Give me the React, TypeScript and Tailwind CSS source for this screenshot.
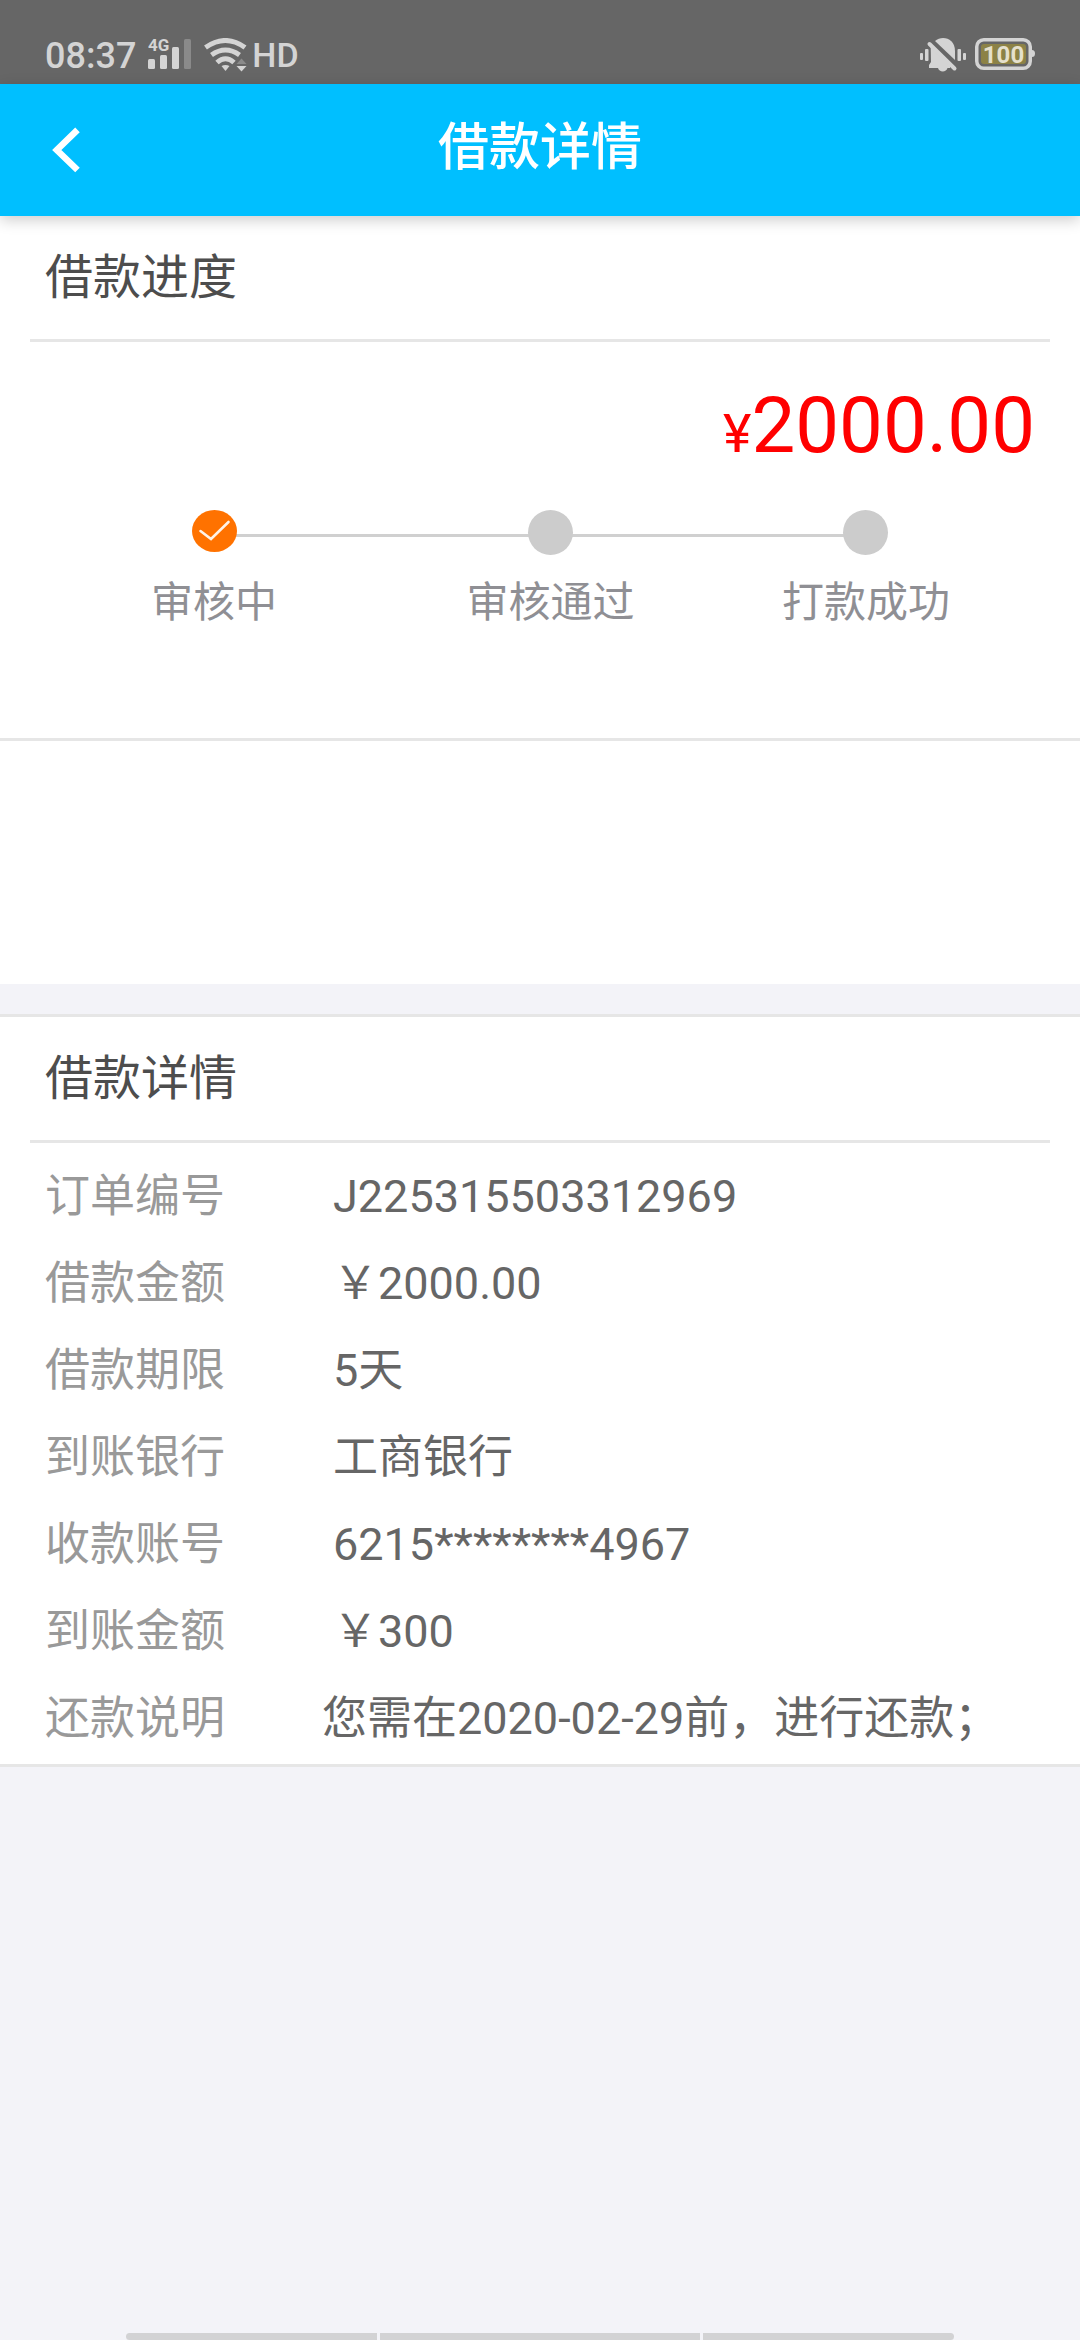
import { useState } from 'react';

const steps = [
    { label: '审核中', done: true },
    { label: '审核通过', done: false },
    { label: '打款成功', done: false },
];

const details = [
    { label: '订单编号', value: 'J225315503312969' },
    { label: '借款金额', value: '￥2000.00' },
    { label: '借款期限', value: '5天' },
    { label: '到账银行', value: '工商银行' },
    { label: '收款账号', value: '6215********4967' },
    { label: '到账金额', value: '￥300' },
    { label: '还款说明', value: '您需在2020-02-29前，进行还款；', note: true },
];

function StatusBar() {
    return (
        <div className="h-[84px] bg-[#666666] pt-7 px-[45px] flex items-center justify-between text-[#d4d4d4] leading-none">
            <div className="flex items-center">
                <span className="text-4xl leading-none font-medium">08:37</span>
                <svg className="ml-3 w-11 h-10 overflow-visible" viewBox="0 -2 44 40" fill="currentColor">
                    <text x="0" y="13" fontSize="17" fontWeight="700">4G</text>
                    <rect x="0" y="21" width="7" height="10" rx="1.5" />
                    <rect x="12" y="17" width="7" height="14" rx="1.5" />
                    <rect x="24" y="9" width="7" height="22" rx="1.5" />
                    <rect x="36" y="1" width="7" height="30" rx="1.5" fill="#8a8a8a" />
                </svg>
                <svg className="ml-3 w-11 h-9" viewBox="0 0 44 36" fill="none" stroke="currentColor" strokeWidth="5">
                    <path d="M1.5 9.5 Q21.5 -4.5 41 9.5" />
                    <path d="M7.5 17 Q21.5 7 35.5 17" />
                    <path d="M13 24.5 Q21.5 17 30 24.5" />
                    <path d="M17.5 28 Q21.5 26 25.5 28 L21.5 33 Z" fill="currentColor" stroke="none" />
                    <path d="M31 27 L37.5 18.5 L44 27 Z" fill="#666666" stroke="none" />
                    <path d="M32.5 26 L37.5 20.5 L42.5 26 Z" fill="#8a8a8a" stroke="none" />
                    <path d="M32.5 28 H42.5 L37.5 33.5 Z" fill="currentColor" stroke="none" />
                </svg>
                <span className="ml-1 pb-0.5 text-[34px] leading-none font-medium">HD</span>
            </div>
            <div className="flex items-center gap-[7px]">
                <svg className="w-12 h-10" viewBox="0 0 48 40" fill="currentColor">
                    <rect x="0" y="17" width="3" height="7" rx="1" />
                    <rect x="5" y="13" width="3.5" height="12" rx="1" />
                    <rect x="37.5" y="13" width="3.5" height="12" rx="1" />
                    <rect x="43" y="17" width="3" height="7" rx="1" />
                    <path d="M15 5 C22 -1 35 2 35 15 V24 Z" />
                    <path d="M10.7 10 L30 28 V32 H27.5 C26.5 36.5 19 36.5 18 32 H9 V29 L11 26 Z" />
                    <path d="M9.5 8 L34.5 32.5" stroke="currentColor" strokeWidth="4" strokeLinecap="round" />
                </svg>
                <svg className="w-[60px] h-9" viewBox="0 0 60 36">
                    <rect x="1.75" y="1.75" width="53.5" height="28.5" rx="7" fill="none" stroke="#d4d4d4" strokeWidth="3.5" />
                    <path d="M57 12 Q60 12 60 15.5 Q60 19 57 19 Z" fill="#d4d4d4" />
                    <rect x="6" y="6" width="45" height="20" rx="3" fill="#8c8246" />
                    <text x="28.5" y="25" textAnchor="middle" fontSize="24" fontWeight="700" fill="#e5e0cd">100</text>
                </svg>
            </div>
        </div>
    );
}

function StepDot({ done }: { done: boolean }) {
    if (!done) {
        return <span className="w-[45px] h-[45px] rounded-full bg-[#cccccc]" />;
    }
    return (
        <svg className="w-[45px] h-[45px]" viewBox="0 0 45 45" fill="none">
            <ellipse cx="22.5" cy="21" rx="22.5" ry="21" fill="#ff7200" />
            <path d="M8.5 21 L19 29 L36.5 12" stroke="#fff3e8" strokeWidth="2.6" strokeLinecap="round" />
        </svg>
    );
}

function SectionTitle({ children }: { children: string }) {
    return (
        <h2 className="mx-[30px] px-[15px] border-b-3 border-[#e6e6e6] text-5xl leading-[123px] text-[#4d4d4d]">
            {children}
        </h2>
    );
}

export default function App() {
    const [showDetails, setShowDetails] = useState(true);

    return (
        <div className="min-h-screen flex flex-col bg-[#f3f3f8] font-['Roboto','Noto_Sans_CJK_SC',sans-serif]">
            <StatusBar />

            <header className="h-[132px] z-10 bg-[#00bfff] shadow-[0_4px_14px_rgba(0,0,0,0.2)] grid grid-cols-[132px_1fr_132px] items-center">
                <button aria-label="返回" onClick={() => setShowDetails(!showDetails)} className="h-full flex items-center pl-[51px] text-white">
                    <svg className="w-[30px] h-[46px]" viewBox="0 0 30 46" fill="none" stroke="currentColor" strokeWidth="6.5">
                        <path d="M26.5 2.8 L5.8 23 L26.5 43" />
                    </svg>
                </button>
                <h1 className="pb-1 text-center text-white text-[51px] leading-[60px] font-medium">借款详情</h1>
            </header>

            <section className="bg-white">
                <SectionTitle>借款进度</SectionTitle>
                <p className="pt-[39px] px-[45px] text-right text-[78px] leading-[90px] text-[#ff0000]">
                    <span className="text-[54px] leading-none">¥</span>2000.00
                </p>
                <div className="pt-[39px] pb-[105px] pl-[151px] pr-[130px] border-b-3 border-[#e6e6e6]">
                    <div className="relative">
                        <div className="absolute left-[63px] right-[84px] top-6 h-[3px] bg-[#d0d0d0]" />
                        <ol className="relative flex justify-between">
                            {steps.map(step => (
                                <li key={step.label} className="nth-2:pl-[42px] flex flex-col items-center gap-[18px]">
                                    <StepDot done={step.done} />
                                    <span className="text-[42px] leading-[60px] text-[#8f8f94]">{step.label}</span>
                                </li>
                            ))}
                        </ol>
                    </div>
                </div>
                <div className="h-[243px]" />
            </section>

            {showDetails && (
                <section className="mt-[30px] bg-white border-y-3 border-[#e6e6e6]">
                    <SectionTitle>借款详情</SectionTitle>
                    <dl className="pt-2.5 pb-0.5 px-[45px] text-[45px] leading-[87px]">
                        {details.map(item => (
                            <div key={item.label} className="flex">
                                <dt className={`shrink-0 text-[#999999] ${item.note ? 'w-[277px]' : 'w-72'}`}>{item.label}</dt>
                                <dd className="text-[#666666] whitespace-nowrap">{item.value}</dd>
                            </div>
                        ))}
                    </dl>
                </section>
            )}

            {/* system navigation hint */}
            <div className="mt-auto mx-[126px] h-[7px] flex gap-[3px]">
                <span className="flex-[251] bg-[#d2d2d4] rounded-l-md" />
                <span className="flex-[320] bg-[#d2d2d4]" />
                <span className="flex-[251] bg-[#d2d2d4] rounded-r-md" />
            </div>
        </div>
    );
}
